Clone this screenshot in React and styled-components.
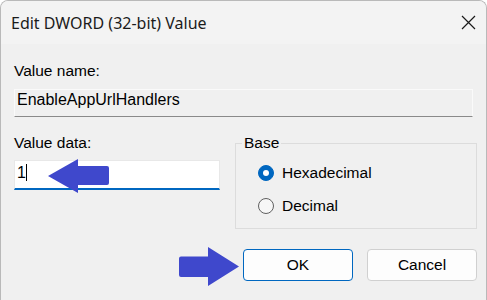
import React from "react";
import styled, { createGlobalStyle } from "styled-components";

const GlobalStyle = createGlobalStyle`
html, body {
  margin: 0;
  padding: 0;
  background: #ffffff;
}
body {
  font-family: "Liberation Sans", Arial, sans-serif;
}
`

const Window = styled.div`
position: relative;
width: 487px;
height: 300px;
box-sizing: border-box;
background-color: #f0f0f0;
border: 1px solid #b9b9b9;
border-bottom: none;
border-radius: 8px 8px 0 0;
overflow: hidden;
`

const TitleBar = styled.div`
height: 43px;
background-color: #f3f3f3;
display: flex;
align-items: center;
justify-content: space-between;
padding: 0 10px 0 10px;
`

const Title = styled.span`
font-family: "Noto Sans", "Open Sans", sans-serif;
font-size: 16px;
color: #1b1b1b;
`

const Body = styled.div`
padding: 18px 9px 0 13px;
`

const Label = styled.div`
font-size: 15.5px;
line-height: 18px;
color: #000;
`

const NameField = styled.div`
margin-top: 9px;
margin-right: 4px;
height: 28px;
box-sizing: border-box;
border: 1px solid #fafafa;
border-bottom-color: #8a8a8a;
padding: 1px 2px;
font-size: 16px;
line-height: 18px;
color: #000;
`

const Row = styled.div`
display: flex;
align-items: flex-start;
gap: 15px;
margin-top: 17px;
`

const DataColumn = styled.div`
width: 206px;
`

const DataInput = styled.div`
margin-top: 8px;
height: 30px;
box-sizing: border-box;
background-color: #ffffff;
border: 1px solid #e8e8e8;
border-bottom: 2px solid #0067c0;
padding: 3px 2px 0;
font-size: 16px;
line-height: 18px;
color: #000;
`

const Caret = styled.span`
display: inline-block;
width: 1px;
height: 17px;
background: #000;
vertical-align: -3px;
`

const GroupBox = styled.fieldset`
flex: 1;
min-width: 0;
margin: 0;
padding: 0 0 10px 0;
border: 1px solid #dcdcdc;
`

const Legend = styled.legend`
margin-left: 6px;
padding: 0 2px;
font-size: 15.5px;
line-height: 18px;
color: #000;
`

const RadioList = styled.div`
display: flex;
flex-direction: column;
gap: 9px;
padding: 9px 0 0 22px;
`

const RadioRow = styled.label`
display: flex;
align-items: center;
gap: 8px;
height: 24px;
font-size: 15.5px;
color: #000;
`

const RadioCircle = styled.span`
position: relative;
width: 16px;
height: 16px;
box-sizing: border-box;
border-radius: 50%;
background: ${p => p.$checked ? "#0067c0" : "#f7f7f7"};
border: 1px solid ${p => p.$checked ? "#0067c0" : "#606060"};
&::after {
  content: "";
  display: ${p => p.$checked ? "block" : "none"};
  position: absolute;
  left: 50%;
  top: 50%;
  width: 6px;
  height: 6px;
  margin: -3px 0 0 -3px;
  border-radius: 50%;
  background: #ffffff;
}
`

const ButtonRow = styled.div`
display: flex;
justify-content: flex-end;
gap: 14px;
margin-top: 20px;
`

const Button = styled.button`
width: 110px;
height: 32px;
box-sizing: border-box;
border-radius: 4px;
background: #fdfdfd;
border: 1px solid ${p => p.$primary ? "#0067c0" : "#d0d0d0"};
font-family: "Liberation Sans", Arial, sans-serif;
font-size: 15.5px;
color: #000;
`

const Arrow = styled.svg`
position: absolute;
left: ${p => p.$x}px;
top: ${p => p.$y}px;
`

export default function App() {
  return (
    <>
      <GlobalStyle />
      <Window>
        <TitleBar>
          <Title>Edit DWORD (32-bit) Value</Title>
          <svg width="15" height="15" viewBox="0 0 15 15">
            <path d="M1 1 L14 14 M14 1 L1 14" stroke="#1a1a1a" strokeWidth="1.2" fill="none" />
          </svg>
        </TitleBar>
        <Body>
          <Label>Value name:</Label>
          <NameField>EnableAppUrlHandlers</NameField>
          <Row>
            <DataColumn>
              <Label>Value data:</Label>
              <DataInput>1<Caret /></DataInput>
            </DataColumn>
            <GroupBox>
              <Legend>Base</Legend>
              <RadioList>
                <RadioRow><RadioCircle $checked />Hexadecimal</RadioRow>
                <RadioRow><RadioCircle />Decimal</RadioRow>
              </RadioList>
            </GroupBox>
          </Row>
          <ButtonRow>
            <Button $primary>OK</Button>
            <Button>Cancel</Button>
          </ButtonRow>
        </Body>
        <Arrow $x={45} $y={156} width="66" height="38" viewBox="0 0 66 38">
          <path d="M2 19 L32 2 L32 9 L61 9 Q63 9 63 11 L63 26 Q63 28 61 28 L32 28 L32 36 Z" fill="#3f48cc" />
        </Arrow>
        <Arrow $x={176} $y={244} width="64" height="44" viewBox="0 0 64 44">
          <path d="M4 11.5 L31 11.5 L31 2 L62 21.5 L31 41 L31 32 L4 32 Q2 32 2 30 L2 13.5 Q2 11.5 4 11.5 Z" fill="#3f48cc" />
        </Arrow>
      </Window>
    </>
  );
}
